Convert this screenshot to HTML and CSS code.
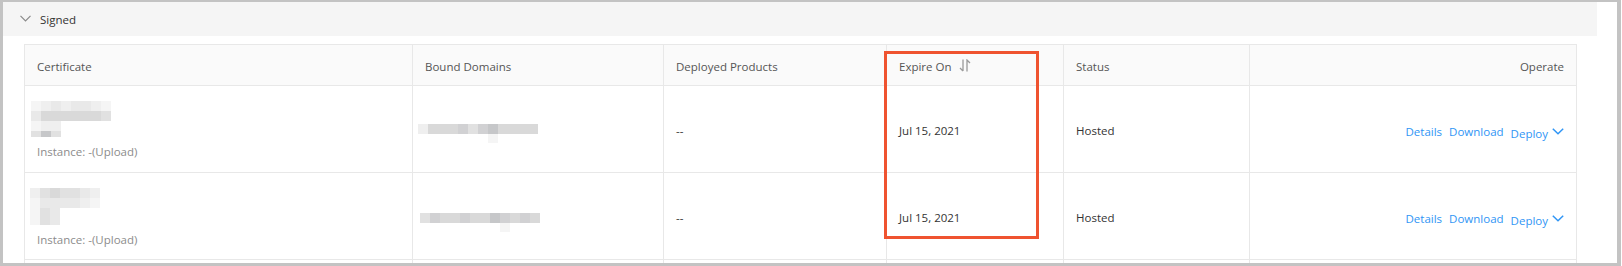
FILE: index.html
```html
<!DOCTYPE html>
<html lang="en">
<head>
<meta charset="utf-8">
<title>Signed certificates</title>
<link rel="stylesheet" href="styles.css">
</head>
<body>
<div class="frame">
  <div class="section-head">
    <svg class="chev" width="11" height="7" viewBox="0 0 11 7"><polyline points="0.5,0.8 5.5,5.8 10.5,0.8" fill="none" stroke="#8a8a8a" stroke-width="1.2"/></svg>
    <span>Signed</span>
  </div>
  <div class="table-wrap">
    <table class="cert-table">
      <colgroup>
        <col class="c1"><col class="c2"><col class="c3"><col class="c4"><col class="c5"><col class="c6">
      </colgroup>
      <thead>
        <tr>
          <th>Certificate</th>
          <th>Bound Domains</th>
          <th>Deployed Products</th>
          <th><span class="sort-head">Expire On
            <svg width="12" height="13" viewBox="0 0 12 13"><path d="M4 0.5V12 M1 9 L4 12 M8 12.5V1 L11 4" fill="none" stroke="#9a9a9a" stroke-width="1.3"/></svg></span></th>
          <th>Status</th>
          <th class="right">Operate</th>
        </tr>
      </thead>
      <tbody>
        <tr>
          <td>
            <div class="mosaic cert8">
              <i class="s1"></i><i class="s2"></i><i class="s3"></i><i class="s2"></i><i class="s3"></i><i class="s3"></i><i class="s2"></i><i class="s1"></i>
              <i class="s3"></i><i class="s5"></i><i class="s5"></i><i class="s5"></i><i class="s5"></i><i class="s5"></i><i class="s5"></i><i class="s4"></i>
              <i class="s1"></i><i class="s2"></i><i class="s2"></i><i></i><i></i><i></i><i></i><i></i>
              <i class="s4"></i><i class="s7"></i><i class="s4"></i><i></i><i></i><i></i><i></i><i></i>
            </div>
            <div class="instance">Instance: -(Upload)</div>
          </td>
          <td>
            <div class="mosaic dom dom-a">
              <i class="s2"></i><i class="s5"></i><i class="s5"></i><i class="s5"></i><i class="s6"></i><i class="s4"></i><i class="s6"></i><i class="s7"></i><i class="s5"></i><i class="s5"></i><i class="s5"></i><i class="s5"></i>
              <i></i><i></i><i></i><i></i><i></i><i></i><i></i><i class="s1"></i><i></i><i></i><i></i><i></i>
            </div>
          </td>
          <td>--</td>
          <td>Jul 15, 2021</td>
          <td>Hosted</td>
          <td>
            <div class="ops">
              <a class="link">Details</a>
              <a class="link">Download</a>
              <a class="link deploy">Deploy
                <svg width="12" height="7" viewBox="0 0 12 7"><polyline points="0.8,0.8 6,5.8 11.2,0.8" fill="none" stroke="#2f95f5" stroke-width="1.5"/></svg></a>
            </div>
          </td>
        </tr>
        <tr>
          <td>
            <div class="mosaic cert7">
              <i class="s2"></i><i class="s4"></i><i class="s5"></i><i class="s4"></i><i class="s4"></i><i class="s3"></i><i class="s2"></i>
              <i class="s1"></i><i class="s3"></i><i class="s3"></i><i class="s3"></i><i class="s3"></i><i class="s2"></i><i class="s1"></i>
              <i class="s1"></i><i class="s4"></i><i class="s3"></i><i></i><i></i><i></i><i></i>
              <i class="s1"></i><i class="s4"></i><i class="s3"></i><i></i><i></i><i></i><i></i>
            </div>
            <div class="instance">Instance: -(Upload)</div>
          </td>
          <td>
            <div class="mosaic dom dom-b">
              <i class="s4"></i><i class="s6"></i><i class="s5"></i><i class="s5"></i><i class="s6"></i><i class="s5"></i><i class="s5"></i><i class="s7"></i><i class="s6"></i><i class="s5"></i><i class="s6"></i><i class="s5"></i>
              <i></i><i></i><i></i><i></i><i></i><i></i><i></i><i></i><i class="s1"></i><i></i><i></i><i></i>
            </div>
          </td>
          <td>--</td>
          <td>Jul 15, 2021</td>
          <td>Hosted</td>
          <td>
            <div class="ops">
              <a class="link">Details</a>
              <a class="link">Download</a>
              <a class="link deploy">Deploy
                <svg width="12" height="7" viewBox="0 0 12 7"><polyline points="0.8,0.8 6,5.8 11.2,0.8" fill="none" stroke="#2f95f5" stroke-width="1.5"/></svg></a>
            </div>
          </td>
        </tr>
        <tr class="clipped">
          <td></td><td></td><td></td><td></td><td></td><td></td>
        </tr>
      </tbody>
    </table>
  </div>
  <div class="highlight"></div>
</div>
</body>
</html>
```

FILE: styles.css
```css
html, body {
  margin: 0;
  padding: 0;
  background: #ffffff;
}

body {
  font-family: "Open Sans", "Noto Sans", "Liberation Sans", sans-serif;
  font-size: 11.5px;
  color: #333333;
}

.frame {
  position: relative;
  width: 1621px;
  height: 266px;
  box-sizing: border-box;
  border-style: solid;
  border-color: #c3c3c3;
  border-width: 2px 4px 3px 3px;
  overflow: hidden;
  background: #ffffff;
}

.section-head {
  width: 1594px;
  height: 34px;
  box-sizing: border-box;
  background: #f5f5f5;
  display: flex;
  align-items: center;
  gap: 9px;
  padding-left: 17px;
  padding-top: 1px;
  color: #333333;
}

.chev {
  display: block;
  margin-top: -3px;
}

.table-wrap {
  padding: 8px 0 0 21px;
}

.cert-table {
  border-collapse: collapse;
  table-layout: fixed;
  width: 1553px;
}

.c1 { width: 388px; }
.c2 { width: 251px; }
.c3 { width: 223px; }
.c4 { width: 177px; }
.c5 { width: 186px; }
.c6 { width: 327px; }

.cert-table th,
.cert-table td {
  border: 1px solid #e8e8e8;
  padding: 3px 12px 0;
  text-align: left;
  vertical-align: middle;
}

.cert-table th {
  height: 41px;
  box-sizing: border-box;
  background: #fafafa;
  font-weight: normal;
  color: #555555;
}

.cert-table td {
  height: 87px;
  box-sizing: border-box;
  color: #333333;
}

.cert-table .right {
  text-align: right;
}

.sort-head {
  display: inline-flex;
  align-items: center;
  gap: 7px;
}

.sort-head svg {
  display: block;
  margin-top: -2px;
}

.mosaic {
  display: grid;
}

.mosaic i {
  display: block;
}

.cert8 {
  grid-template-columns: repeat(8, 10px);
  grid-template-rows: 10px 10px 10px 6px;
  margin-left: -6px;
}

.cert7 {
  grid-template-columns: repeat(7, 10px);
  grid-template-rows: 10px 10px 10px 7px;
  margin-left: -7px;
}

.dom {
  grid-template-columns: repeat(12, 10px);
  grid-template-rows: 10px 9px;
  margin-bottom: -9px;
}

.dom-a { margin-left: -7px; margin-top: -3px; }
.dom-b { margin-left: -5px; margin-top: 1px; }

.s1 { background: #f5f5f5; }
.s2 { background: #efefef; }
.s3 { background: #e9e9e9; }
.s4 { background: #e1e1e1; }
.s5 { background: #d9d9d9; }
.s6 { background: #d1d1d3; }
.s7 { background: #c6c7c9; }

.instance {
  margin-top: 7px;
  line-height: 16px;
  color: #8c8c8c;
}

.ops {
  display: flex;
  justify-content: flex-end;
  align-items: center;
  gap: 7px;
  padding-top: 2px;
}

.link {
  color: #2f95f5;
  cursor: pointer;
}

.deploy {
  display: inline-flex;
  align-items: center;
  gap: 4px;
  padding-top: 4px;
}

.deploy svg {
  display: block;
  margin-top: -4px;
}

.clipped td {
  height: 40px;
}

.highlight {
  position: absolute;
  left: 881px;
  top: 49px;
  width: 155px;
  height: 188px;
  box-sizing: border-box;
  border: 3px solid #ef5330;
}
```
